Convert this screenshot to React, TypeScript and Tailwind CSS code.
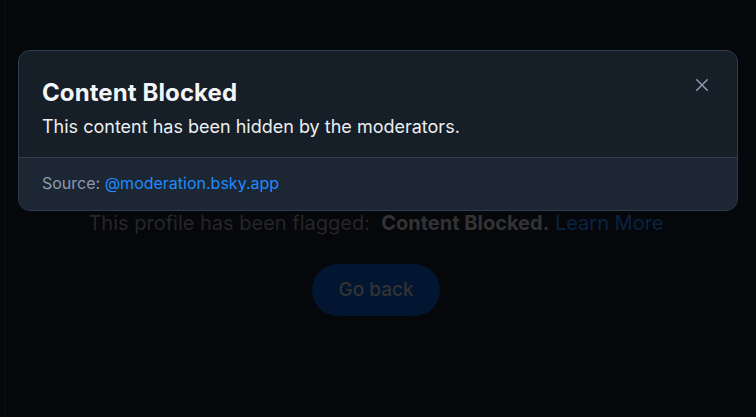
import React from 'react';

function CloseIcon() {
  return (
    <svg width="18" height="18" viewBox="0 0 24 24" fill="none" stroke="currentColor" strokeWidth="2" strokeLinecap="round">
      <path d="M5 5l14 14M19 5L5 19" />
    </svg>
  );
}

export default function App() {
  return (
    <div className="relative h-[417px] w-[756px] overflow-hidden bg-[#05070b] font-['Inter','Liberation_Sans',sans-serif]">
      {/* dimmed page behind the dialog */}
      <div className="ml-[4px] h-full border-l border-[#0d1117] pr-[9px] pt-[209px]">
        <div className="flex flex-col items-center">
          <p className="text-[20px] leading-[28px] text-[#262626]">
            This profile has been flagged:&nbsp; <span className="font-bold text-[#333333]">Content Blocked.</span>{' '}
            <span className="text-[#0a2342]">Learn More</span>
          </p>
          <button className="mt-[27px] h-[52px] w-[128px] rounded-full bg-[#021631] text-[19px] font-medium text-[#333333]">
            Go back
          </button>
        </div>
      </div>

      {/* dialog */}
      <div className="absolute left-[18px] top-[50px] w-[720px] overflow-hidden rounded-[12px] border border-[#2e3d4f] bg-[#161e27]">
        <div className="relative px-[23px] pb-[18px] pt-[27px]">
          <h2 className="text-[24px] font-bold leading-[30px] tracking-[0.1px] text-[#f4f5f7]">Content Blocked</h2>
          <p className="mt-[7px] text-[18px] leading-[24px] text-[#eceef1]">This content has been hidden by the moderators.</p>
          <button className="absolute right-[26px] top-[25px] text-[#8c9bb0]">
            <CloseIcon />
          </button>
        </div>
        <div className="flex h-[53px] items-center border-t border-[#2e3d4f] bg-[#1c2733] px-[23px] pb-[3px] text-[16px] text-[#8c9bb0]">
          Source:&nbsp;<span className="text-[#208bfe]">@moderation.bsky.app</span>
        </div>
      </div>
    </div>
  );
}
